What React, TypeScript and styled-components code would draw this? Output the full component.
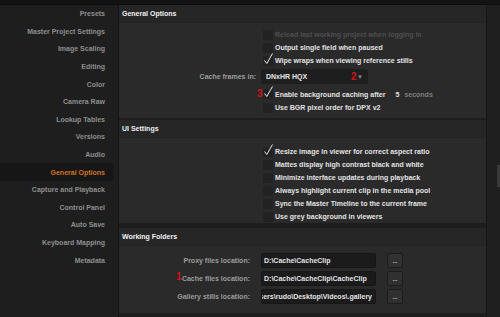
import React from 'react';
import styled, { createGlobalStyle } from 'styled-components';

const GlobalStyle = createGlobalStyle`
  html, body {
    margin: 0;
    padding: 0;
    background: #1c1c1c;
  }
  body {
    font-family: "Liberation Sans", Arial, sans-serif;
    font-size: 7px;
    font-weight: bold;
  }
`;

const Window = styled.div`
  width: 500px;
  height: 317px;
  display: flex;
  flex-direction: column;
  background: #1c1c1c;
  overflow: hidden;
`;

const TopStrip = styled.div`
  height: 4px;
  flex: none;
  background: #131313;
  border-bottom: 1px solid #0e0e0e;
`;

const Body = styled.div`
  flex: 1;
  display: flex;
  min-height: 0;
`;

const Sidebar = styled.div`
  width: 118px;
  flex: none;
  background: #1e1e1f;
  border-right: 1px solid #151515;
  display: flex;
  flex-direction: column;
`;

const SideItem = styled.div<{ $active?: boolean }>`
  height: 17.6px;
  margin-right: 5px;
  padding-right: 8px;
  display: flex;
  align-items: center;
  justify-content: flex-end;
  color: ${p => (p.$active ? '#cf7322' : '#8e8e8e')};
  background: ${p => (p.$active ? '#161616' : 'transparent')};
  white-space: nowrap;
`;

const Main = styled.div`
  flex: 1;
  display: flex;
  flex-direction: column;
  background: #1d1d1d;
  min-width: 0;
`;

const Section = styled.div<{ $gap?: number }>`
  display: flex;
  flex-direction: column;
  margin-bottom: ${p => p.$gap ?? 0}px;
`;

const SectionHeader = styled.div`
  height: 17px;
  display: flex;
  align-items: center;
  padding-left: 3px;
  color: #f0f0f0;
  background: #262627;
`;

const SectionBox = styled.div<{ $pt: number; $pb: number }>`
  position: relative;
  background: #2a2a2b;
  border-top: 1px solid #232324;
  padding: ${p => p.$pt}px 0 ${p => p.$pb}px 0;
  display: flex;
  flex-direction: column;
`;

const Row = styled.div<{ $h?: number; $mt?: number }>`
  position: relative;
  display: flex;
  align-items: center;
  height: ${p => p.$h ?? 13}px;
  margin-top: ${p => p.$mt ?? 0}px;
`;

const LabelCell = styled.div<{ $w: number }>`
  width: ${p => p.$w}px;
  flex: none;
  text-align: right;
  color: #9c9c9c;
  white-space: nowrap;
`;

const CheckBoxBox = styled.div`
  position: relative;
  width: 10px;
  height: 10px;
  flex: none;
  margin-left: 7px;
  margin-right: 2px;
  background: #222223;
  border-radius: 1px;
`;

const Tick = styled.svg`
  position: absolute;
  left: 0;
  top: -3px;
  overflow: visible;
`;

const CheckLabel = styled.span<{ $dim?: boolean }>`
  color: ${p => (p.$dim ? '#4e4e4f' : '#e2e2e2')};
  white-space: nowrap;
`;

const Select = styled.div`
  margin-left: 5px;
  width: 107px;
  height: 15px;
  background: #1e1e1f;
  border-radius: 2px;
  display: flex;
  align-items: center;
  padding: 0 5px;
  box-sizing: border-box;
  color: #e6e6e6;
`;

const SelectText = styled.span`
  flex: 1;
`;

const Caret = styled.span`
  color: #8a8a8a;
  font-size: 6px;
`;

const Seconds = styled.span`
  margin-left: 10px;
  color: #e2e2e2;
`;

const Unit = styled.span`
  margin-left: 5px;
  color: #7e7e7e;
`;

const Annotation = styled.span<{ $left: number; $top: number }>`
  position: absolute;
  left: ${p => p.$left}px;
  top: ${p => p.$top}px;
  color: #d01414;
  font-size: 10px;
  font-weight: bold;
  line-height: 1;
`;

const FolderRow = styled.div`
  position: relative;
  display: flex;
  align-items: center;
  height: 15px;
  margin-bottom: 3px;
`;

const PathInput = styled.div<{ $scrolled?: boolean }>`
  margin-left: 11px;
  width: 115px;
  height: 15px;
  box-sizing: border-box;
  background: #1b1b1c;
  border: 1px solid #171717;
  border-radius: 2px;
  color: #e4e4e4;
  display: flex;
  align-items: center;
  justify-content: ${p => (p.$scrolled ? 'flex-end' : 'flex-start')};
  padding: 0 3px 0 2px;
  overflow: hidden;
  white-space: nowrap;
`;

const BrowseButton = styled.div`
  margin-left: 11px;
  width: 16px;
  height: 15px;
  box-sizing: border-box;
  background: #303031;
  border: 1px solid #1c1c1c;
  border-radius: 2px;
  color: #d0d0d0;
  display: flex;
  align-items: center;
  justify-content: center;
  font-size: 6px;
  line-height: 1;
`;

const Scrollbar = styled.div`
  width: 13px;
  flex: none;
  background: #1f1f20;
  border-left: 1px solid #171717;
  display: flex;
  justify-content: flex-end;
  padding-top: 160px;
`;

const Thumb = styled.div`
  width: 3px;
  height: 22px;
  background: #3a3a3b;
`;

const TickMark: React.FC = () => (
  <Tick width="10" height="12" viewBox="0 0 10 12">
    <path d="M1.5 7.5 L3.8 10.5 L9.5 0.5" fill="none" stroke="#e8e8e8" strokeWidth="1" />
  </Tick>
);

const CheckRow: React.FC<{ label: string; checked?: boolean; dim?: boolean }> = ({ label, checked, dim }) => (
  <Row>
    <LabelCell $w={137} />
    <CheckBoxBox>{checked && <TickMark />}</CheckBoxBox>
    <CheckLabel $dim={dim}>{label}</CheckLabel>
  </Row>
);

const sideItems = [
  'Presets',
  'Master Project Settings',
  'Image Scaling',
  'Editing',
  'Color',
  'Camera Raw',
  'Lookup Tables',
  'Versions',
  'Audio',
  'General Options',
  'Capture and Playback',
  'Control Panel',
  'Auto Save',
  'Keyboard Mapping',
  'Metadata',
];

const uiSettings = [
  { label: 'Resize image in viewer for correct aspect ratio', checked: true },
  { label: 'Mattes display high contrast black and white' },
  { label: 'Minimize interface updates during playback' },
  { label: 'Always highlight current clip in the media pool' },
  { label: 'Sync the Master Timeline to the current frame' },
  { label: 'Use grey background in viewers' },
];

const folders = [
  { label: 'Proxy files location:', path: 'D:\\Cache\\CacheClip' },
  { label: 'Cache files location:', path: 'D:\\Cache\\CacheClip\\CacheClip', mark: '1' },
  { label: 'Gallery stills location:', path: 'C:\\Users\\rudo\\Desktop\\Videos\\.gallery', scrolled: true },
];

export default function App() {
  return (
    <Window>
      <GlobalStyle />
      <TopStrip />
      <Body>
        <Sidebar>
          {sideItems.map(item => (
            <SideItem key={item} $active={item === 'General Options'}>
              {item}
            </SideItem>
          ))}
        </Sidebar>
        <Main>
          <Section $gap={2}>
            <SectionHeader>General Options</SectionHeader>
            <SectionBox $pt={5} $pb={4}>
              <CheckRow label="Reload last working project when logging in" dim />
              <CheckRow label="Output single field when paused" />
              <CheckRow label="Wipe wraps when viewing reference stills" checked />
              <Row $h={15} $mt={2}>
                <LabelCell $w={137}>Cache frames in:</LabelCell>
                <Select>
                  <SelectText>DNxHR HQX</SelectText>
                  <Caret>▼</Caret>
                </Select>
                <Annotation $left={232} $top={3}>2</Annotation>
              </Row>
              <Row $mt={3} $h={14}>
                <LabelCell $w={137} />
                <CheckBoxBox>
                  <TickMark />
                </CheckBoxBox>
                <CheckLabel>Enable background caching after</CheckLabel>
                <Seconds>5</Seconds>
                <Unit>seconds</Unit>
                <Annotation $left={138} $top={2}>3</Annotation>
              </Row>
              <CheckRow label="Use BGR pixel order for DPX v2" />
            </SectionBox>
          </Section>

          <Section $gap={5}>
            <SectionHeader>UI Settings</SectionHeader>
            <SectionBox $pt={7} $pb={0}>
              {uiSettings.map(s => (
                <CheckRow key={s.label} label={s.label} checked={s.checked} />
              ))}
            </SectionBox>
          </Section>

          <Section>
            <SectionHeader>Working Folders</SectionHeader>
            <SectionBox $pt={7} $pb={6}>
              {folders.map(f => (
                <FolderRow key={f.label}>
                  <LabelCell $w={131}>{f.label}</LabelCell>
                  <PathInput $scrolled={f.scrolled}>{f.path}</PathInput>
                  <BrowseButton>...</BrowseButton>
                  {f.mark && <Annotation $left={57} $top={1}>{f.mark}</Annotation>}
                </FolderRow>
              ))}
            </SectionBox>
          </Section>
        </Main>
        <Scrollbar>
          <Thumb />
        </Scrollbar>
      </Body>
    </Window>
  );
}
